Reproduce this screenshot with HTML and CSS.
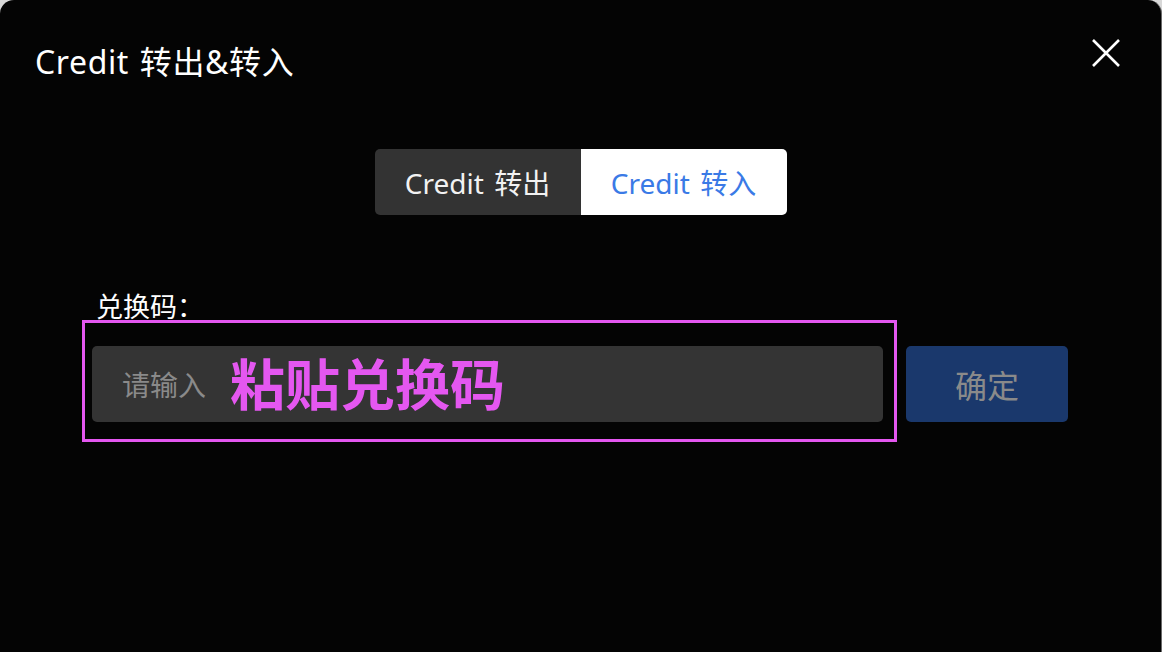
FILE: index.html
```html
<!DOCTYPE html>
<html lang="zh-CN">
<head>
<meta charset="utf-8">
<title>Credit 转出&amp;转入</title>
<link rel="stylesheet" href="styles.css">
</head>
<body>
<div class="dialog">
  <div class="header">
    <div class="title">Credit 转出&amp;转入</div>
    <button class="close" aria-label="关闭">
      <svg width="30" height="30" viewBox="0 0 30 30"><path d="M2 2 L28 28 M28 2 L2 28" stroke="#fff" stroke-width="2.6" stroke-linecap="butt" fill="none"/></svg>
    </button>
  </div>
  <div class="tabs">
    <div class="tab">Credit 转出</div>
    <div class="tab active">Credit 转入</div>
  </div>
  <div class="form">
    <div class="label">兑换码：</div>
    <div class="row">
      <div class="highlight">
        <div class="input">
          <span class="placeholder">请输入</span>
          <span class="note">粘贴兑换码</span>
        </div>
      </div>
      <button class="confirm">确定</button>
    </div>
  </div>
</div>
</body>
</html>
```
FILE: styles.css
```css
html, body {
  margin: 0;
  padding: 0;
  background: #d8d8d8;
}
body {
  font-family: "Noto Sans", "Noto Sans CJK SC", sans-serif;
  width: 1162px;
  height: 652px;
  overflow: hidden;
}
.dialog {
  box-sizing: border-box;
  width: 1162px;
  height: 652px;
  background: #040404;
  border-radius: 14px 14px 0 0;
  border-right: 1px solid #6a6a6a;
  color: #fff;
}
.header {
  display: flex;
  justify-content: space-between;
  align-items: flex-start;
  padding: 0 40px 0 35px;
}
.title {
  margin-top: 42px;
  font-size: 32px;
  line-height: 40px;
  letter-spacing: 0.6px;
  word-spacing: 2px;
  color: #fff;
}
.close {
  margin-top: 38px;
  padding: 0;
  border: 0;
  background: none;
  width: 30px;
  height: 30px;
  display: block;
}
.close svg { display: block; }
.tabs {
  display: flex;
  width: 412px;
  height: 66px;
  margin: 67px auto 0;
  border-radius: 5px;
  overflow: hidden;
}
.tab {
  flex: 1 1 0;
  display: flex;
  align-items: center;
  justify-content: center;
  background: #333333;
  color: #f2f2f2;
  font-size: 28px;
  word-spacing: 3px;
}
.tab.active {
  background: #ffffff;
  color: #3a7ae6;
}
.form {
  padding-left: 82px;
  margin-top: 78px;
}
.label {
  margin-left: 14px;
  font-size: 27px;
  line-height: 27px;
  color: #fff;
}
.row {
  display: flex;
  align-items: center;
  gap: 9px;
}
.highlight {
  box-sizing: border-box;
  width: 815px;
  height: 122px;
  border: 3px solid #e457f0;
  padding: 23px 11px 17px 7px;
}
.input {
  height: 76px;
  background: #343434;
  border-radius: 5px;
  display: flex;
  align-items: center;
  padding-left: 30px;
  gap: 24px;
}
.placeholder {
  color: #8a8a8a;
  font-size: 28px;
}
.note {
  color: #e457f0;
  font-size: 55px;
  font-weight: 700;
  line-height: 60px;
}
.confirm {
  width: 162px;
  height: 76px;
  border: 0;
  border-radius: 5px;
  background: #1a386c;
  color: #8a8a8a;
  font-family: inherit;
  font-size: 32px;
  padding: 0;
  margin-top: 5px;
}
```
